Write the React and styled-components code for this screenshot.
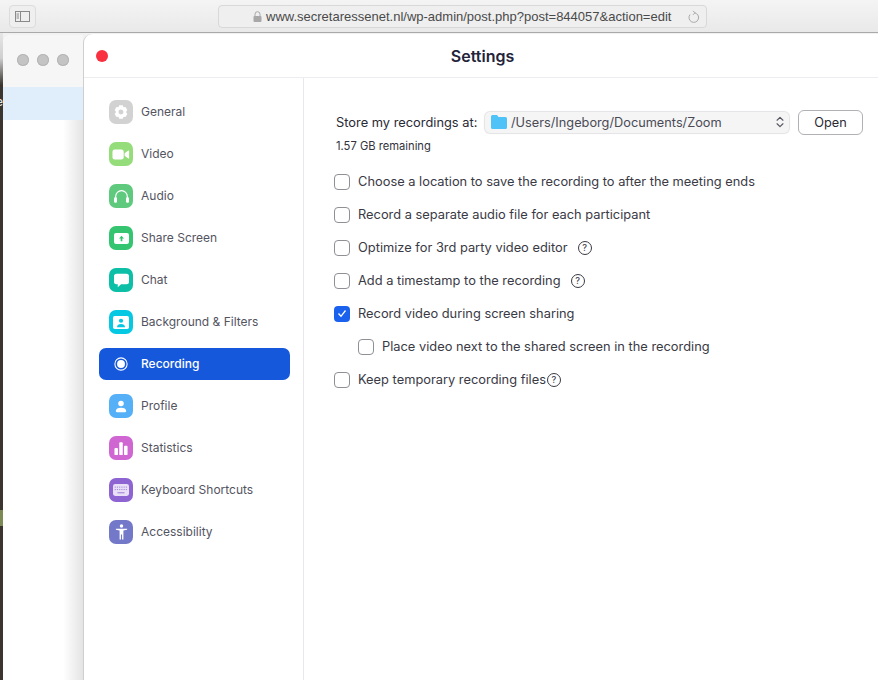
import React from 'react'
import styled, { createGlobalStyle } from 'styled-components'
import { ChevronsUpDown } from 'lucide-react'

const Global = createGlobalStyle`
html, body { margin: 0; padding: 0; background: #fff; }
body { font-family: Inter, "Liberation Sans", sans-serif; overflow: hidden; }
`

const Page = styled.div`
width: 878px;
height: 680px;
display: flex;
flex-direction: column;
overflow: hidden;
`
const Toolbar = styled.div`
height: 33px;
flex: none;
display: flex;
align-items: flex-start;
padding: 5px 0 0 9px;
box-sizing: border-box;
background: linear-gradient(#f4f4f4, #e9e9e9);
border-bottom: 1px solid #a9a9a9;
`
const SidebarToggle = styled.div`
width: 27px;
height: 23px;
box-sizing: border-box;
margin-right: 182px;
display: flex;
align-items: center;
justify-content: center;
border: 1px solid #dcdcdc;
border-radius: 4px;
background: #efefef;
`
const AddressBar = styled.div`
width: 489px;
height: 23px;
box-sizing: border-box;
display: flex;
align-items: center;
padding: 0 6px 0 34px;
border: 1px solid #d8d8d8;
border-radius: 4px;
background: #efefef;
color: #4a4a4a;
font-family: "Liberation Sans", sans-serif;
font-size: 13px;
`
const Url = styled.span`
margin-left: 4px;
flex: 1;
white-space: nowrap;
`
const Desktop = styled.div`
flex: 1;
display: flex;
min-height: 0;
background: #f1f1f1;
`
const Backdrop = styled.div`
width: 3px;
flex: none;
background: linear-gradient(#e6e6e6 0, #cfcfcf 25px, #3a362f 52px);
position: relative;
overflow: hidden;
`
const BackLetter = styled.span`
position: absolute;
left: -4px;
top: 62px;
font-size: 12px;
line-height: 14px;
color: #e8e8e8;
`
const BackMark = styled.div`
position: absolute;
left: 0;
top: 477px;
width: 3px;
height: 16px;
background: #7d8a55;
`
const BackWindow = styled.div`
width: 80px;
flex: none;
margin-top: 2px;
box-sizing: border-box;
background: linear-gradient(90deg, #fff 75%, #e4e4e4 100%);
border-top-left-radius: 8px;
display: flex;
flex-direction: column;
`
const Lights = styled.div`
height: 52px;
flex: none;
display: flex;
gap: 8px;
padding: 19px 0 0 14px;
box-sizing: border-box;
background: #f6f6f6;
border-top-left-radius: 8px;
`
const Light = styled.div`
width: 12px;
height: 12px;
border-radius: 50%;
background: #c4c4c4;
box-shadow: inset 0 0 0 1px #b5b5b5;
`
const BackSelected = styled.div`
height: 33px;
flex: none;
background: #e0edfb;
`
const Window = styled.div`
flex: 1;
min-width: 0;
margin-top: 1px;
display: flex;
flex-direction: column;
background: #fff;
border-top-left-radius: 9px;
border-left: 1px solid #cfcfcf;
`
const TitleBar = styled.div`
height: 44px;
flex: none;
position: relative;
display: flex;
align-items: center;
justify-content: center;
box-sizing: border-box;
border-bottom: 1px solid #ebedf0;
`
const Close = styled.div`
position: absolute;
left: 12px;
top: 16px;
width: 12px;
height: 12px;
border-radius: 50%;
background: #f9303f;
`
const Title = styled.div`
font-size: 16px;
font-weight: 600;
color: #23233a;
padding: 1px 0 0 3px;
`
const Body = styled.div`
flex: 1;
display: flex;
min-height: 0;
`
const Sidebar = styled.div`
width: 220px;
flex: none;
box-sizing: border-box;
border-right: 1px solid #e8e8ea;
padding: 18px 13px 0 15px;
display: flex;
flex-direction: column;
gap: 10px;
`
const NavRow = styled.div`
height: 32px;
display: flex;
align-items: center;
gap: 8px;
padding-left: 10px;
border-radius: 7px;
font-size: 12px;
color: ${p => (p.$active ? '#fff' : '#54545f')};
background: ${p => (p.$active ? '#1558dc' : 'transparent')};
font-weight: ${p => (p.$active ? 500 : 400)};
`
const NavLabel = styled.span`
padding-bottom: 2px;
`
const NavIcon = styled.div`
width: 24px;
height: 24px;
flex: none;
border-radius: 7px;
background: ${p => p.$color};
display: flex;
align-items: center;
justify-content: center;
`
const Main = styled.div`
flex: 1;
min-width: 0;
padding: 32px 15px 0 30px;
display: flex;
flex-direction: column;
`
const StoreRow = styled.div`
display: flex;
align-items: center;
padding-left: 2px;
height: 24px;
color: #2a2a35;
font-size: 12.85px;
`
const StoreLabel = styled.span`
width: 149px;
flex: none;
white-space: nowrap;
`
const PathSelect = styled.div`
width: 304px;
height: 21px;
flex: none;
box-sizing: border-box;
display: flex;
align-items: center;
gap: 4px;
padding: 0 2px 0 6px;
background: #f5f5f6;
border-radius: 5px;
box-shadow: 0 0 1px 1px #e3e3e5;
color: #4a4a55;
font-size: 12.75px;
`
const PathText = styled.span`
flex: 1;
white-space: nowrap;
`
const OpenButton = styled.div`
margin-left: 9px;
width: 65px;
height: 25px;
flex: none;
box-sizing: border-box;
display: flex;
align-items: center;
justify-content: center;
border: 1px solid #b0b0b5;
border-radius: 6px;
font-size: 12.75px;
color: #2a2a35;
`
const Remaining = styled.div`
padding-left: 2px;
margin-top: 5px;
margin-bottom: 11px;
height: 15px;
font-size: 11.2px;
line-height: 15px;
color: #33333d;
`
const Options = styled.div`
display: flex;
flex-direction: column;
`
const Option = styled.div`
height: 33px;
display: flex;
align-items: center;
padding-left: ${p => (p.$nested ? '24px' : '0')};
font-size: 12.85px;
color: #3a3a45;
white-space: nowrap;
`
const Box = styled.div`
width: 16px;
height: 16px;
flex: none;
box-sizing: border-box;
margin-right: 8px;
border-radius: 4px;
display: flex;
align-items: center;
justify-content: center;
border: ${p => (p.$checked ? 'none' : '1px solid #8f8f96')};
background: ${p => (p.$checked ? '#1a62ee' : '#fff')};
`
const Help = styled.div`
width: 14px;
height: 14px;
flex: none;
box-sizing: border-box;
margin-left: ${p => p.$gap}px;
border: 1px solid #3a3a45;
border-radius: 50%;
display: flex;
align-items: center;
justify-content: center;
font-size: 9px;
font-weight: 500;
color: #3a3a45;
`

const GearIcon = () => (
  <svg width="16" height="16" viewBox="0 0 18 18">
    <path fill="#fff" fillRule="evenodd" d="M7 1.500h4l.8 2.200 2.300-.4 2 3.400L14.600 9l1.500 2.300-2 3.400-2.300-.4-.8 2.200H7l-.8-2.200-2.300.4-2-3.400L3.400 9 1.900 6.700l2-3.400 2.300.4zM9 6.200a2.800 2.800 0 1 0 0 5.600 2.800 2.800 0 0 0 0-5.600z" />
  </svg>
)
const VideoIcon = () => (
  <svg width="18" height="13" viewBox="0 0 20 14">
    <rect x="0.500" y="1.500" width="12.500" height="11" rx="2.500" fill="#fff" />
    <path fill="#fff" d="M14 5.500 18 2.600c.5-.3 1 0 1 .5v7.800c0 .5-.5.8-1 .5L14 8.500z" />
  </svg>
)
const AudioIcon = () => (
  <svg width="17" height="15" viewBox="0 0 20 18" fill="none">
    <path stroke="#fff" strokeWidth="1.400" d="M3 11V9a7 7 0 0 1 14 0v2" />
    <rect x="1" y="10" width="3.600" height="6.500" rx="1.500" fill="#fff" />
    <rect x="15.400" y="10" width="3.600" height="6.500" rx="1.500" fill="#fff" />
  </svg>
)
const ShareIcon = () => (
  <svg width="15" height="11" viewBox="0 0 18 14" preserveAspectRatio="none">
    <rect width="18" height="14" rx="2.500" fill="#fff" />
    <path fill="#35c46f" d="M9 3.500 12 7h-2v3.500H8V7H6z" />
  </svg>
)
const ChatIcon = () => (
  <svg width="17" height="15" viewBox="0 0 20 18">
    <path fill="#fff" d="M4 1h12a3 3 0 0 1 3 3v6.500a3 3 0 0 1-3 3H9.500L5.500 17v-3.500H4a3 3 0 0 1-3-3V4a3 3 0 0 1 3-3z" />
  </svg>
)
const BackgroundIcon = () => (
  <svg width="16" height="13" viewBox="0 0 18 15" preserveAspectRatio="none">
    <rect width="18" height="15" rx="2" fill="#fff" />
    <circle cx="9" cy="5.500" r="2.400" fill="#05c8e2" />
    <path fill="#05c8e2" d="M4.500 13c0-2.500 2-3.800 4.500-3.800s4.500 1.300 4.500 3.800z" />
  </svg>
)
const RecordIcon = () => (
  <svg width="14" height="14" viewBox="0 0 16 16">
    <circle cx="8" cy="8" r="7" fill="none" stroke="#fff" strokeWidth="1.200" />
    <circle cx="8" cy="8" r="4.500" fill="#fff" />
  </svg>
)
const ProfileIcon = () => (
  <svg width="12" height="13" viewBox="0 0 16 17">
    <circle cx="8" cy="4.500" r="3.700" fill="#fff" />
    <path fill="#fff" d="M2.500 16a1.500 1.500 0 0 1-1.500-1.500C1 11.500 4 10 8 10s7 1.500 7 4.500a1.500 1.500 0 0 1-1.500 1.500z" />
  </svg>
)
const StatsIcon = () => (
  <svg width="14" height="14" viewBox="0 0 16 16">
    <rect x="0.500" y="8" width="4" height="8" rx="1" fill="#fff" />
    <rect x="6" y="1.500" width="4" height="14.500" rx="1" fill="#fff" />
    <rect x="11.500" y="5.500" width="4" height="10.500" rx="1" fill="#fff" />
  </svg>
)
const KeyboardIcon = () => (
  <svg width="16" height="12" viewBox="0 0 18 14" preserveAspectRatio="none">
    <rect width="18" height="14" rx="2.500" fill="#e9e0f7" />
    {[2.5, 5, 7.5, 10, 12.5, 15].map(x => (
      <g key={x}>
        <rect x={x - 0.6} y="3" width="1.300" height="1.300" fill="#a98bdd" />
        <rect x={x - 0.6} y="5.800" width="1.300" height="1.300" fill="#a98bdd" />
      </g>
    ))}
    <rect x="5" y="9.500" width="8" height="1.400" fill="#a98bdd" />
  </svg>
)
const AccessIcon = () => (
  <svg width="13" height="16" viewBox="0 0 16 20">
    <circle cx="8" cy="2.500" r="2.200" fill="#fff" />
    <path fill="#fff" d="M1 5.800h14v1.500l-4.600.8V19.500H8.700v-6.500H7.300v6.500H5.600V8.100L1 7.300z" />
  </svg>
)

const navItems = [
  { label: 'General', color: '#d2d2d2', icon: <GearIcon /> },
  { label: 'Video', color: '#95dc7a', icon: <VideoIcon /> },
  { label: 'Audio', color: '#5fca7e', icon: <AudioIcon /> },
  { label: 'Share Screen', color: '#35c46f', icon: <ShareIcon /> },
  { label: 'Chat', color: '#0cbfa6', icon: <ChatIcon /> },
  { label: 'Background & Filters', color: '#05c8e2', icon: <BackgroundIcon /> },
  { label: 'Recording', active: true, icon: <RecordIcon /> },
  { label: 'Profile', color: '#56b0f8', icon: <ProfileIcon /> },
  { label: 'Statistics', color: '#cf66d2', icon: <StatsIcon /> },
  { label: 'Keyboard Shortcuts', color: '#8e63d2', icon: <KeyboardIcon /> },
  { label: 'Accessibility', color: '#7378c9', icon: <AccessIcon /> },
]

const options = [
  { label: 'Choose a location to save the recording to after the meeting ends' },
  { label: 'Record a separate audio file for each participant' },
  { label: 'Optimize for 3rd party video editor', help: 10 },
  { label: 'Add a timestamp to the recording', help: 10 },
  { label: 'Record video during screen sharing', checked: true },
  { label: 'Place video next to the shared screen in the recording', nested: true },
  { label: 'Keep temporary recording files', help: 1 },
]

export default function App() {
  return (
    <Page>
      <Global />
      <Toolbar>
        <SidebarToggle>
          <svg width="15" height="11" viewBox="0 0 15 11" fill="none" stroke="#8a8a8a">
            <rect x="0.500" y="0.500" width="14" height="10" />
            <path d="M5.500 0.500v10M1.500 3h2.500M1.500 5h2.500M1.500 7h2.500" />
          </svg>
        </SidebarToggle>
        <AddressBar>
          <svg width="9" height="11" viewBox="0 0 9 11">
            <path d="M2 5V3.200a2.500 2.500 0 0 1 5 0V5" fill="none" stroke="#a8a8a8" />
            <rect x="0.500" y="5" width="8" height="6" rx="1" fill="#a8a8a8" />
          </svg>
          <Url>www.secretaressenet.nl/wp-admin/post.php?post=844057&action=edit</Url>
          <svg width="13" height="14" viewBox="0 0 13 14" fill="none" stroke="#a8a8a8">
            <path d="M7.500 2.800a4.800 4.800 0 1 1-4.500 1.800" />
            <path d="M6 .8 8 2.800 6 4.800" />
          </svg>
        </AddressBar>
      </Toolbar>
      <Desktop>
        <Backdrop>
          <BackLetter>e</BackLetter>
          <BackMark />
        </Backdrop>
        <BackWindow>
          <Lights>
            <Light />
            <Light />
            <Light />
          </Lights>
          <BackSelected />
        </BackWindow>
        <Window>
          <TitleBar>
            <Close />
            <Title>Settings</Title>
          </TitleBar>
          <Body>
            <Sidebar>
              {navItems.map(item => (
                <NavRow key={item.label} $active={item.active}>
                  <NavIcon $color={item.color || 'transparent'}>{item.icon}</NavIcon>
                  <NavLabel>{item.label}</NavLabel>
                </NavRow>
              ))}
            </Sidebar>
            <Main>
              <StoreRow>
                <StoreLabel>Store my recordings at:</StoreLabel>
                <PathSelect>
                  <svg width="16" height="14" viewBox="0 0 16 14">
                    <path fill="#4fc3f7" d="M1.500 0h4.500l1.500 2h7a1.500 1.500 0 0 1 1.500 1.500V12.500A1.500 1.500 0 0 1 14.500 14h-13A1.500 1.500 0 0 1 0 12.500V1.500A1.500 1.500 0 0 1 1.500 0z" />
                  </svg>
                  <PathText>/Users/Ingeborg/Documents/Zoom</PathText>
                  <ChevronsUpDown size={14} color="#55555f" />
                </PathSelect>
                <OpenButton>Open</OpenButton>
              </StoreRow>
              <Remaining>1.57 GB remaining</Remaining>
              <Options>
                {options.map(o => (
                  <Option key={o.label} $nested={o.nested}>
                    <Box $checked={o.checked}>
                      {o.checked && (
                        <svg width="10" height="9" viewBox="0 0 10 9" fill="none" stroke="#fff" strokeWidth="1.300">
                          <path d="M1.500 4.500 4 7.300 8.500 1.500" />
                        </svg>
                      )}
                    </Box>
                    {o.label}
                    {o.help !== undefined && <Help $gap={o.help}>?</Help>}
                  </Option>
                ))}
              </Options>
            </Main>
          </Body>
        </Window>
      </Desktop>
    </Page>
  )
}
